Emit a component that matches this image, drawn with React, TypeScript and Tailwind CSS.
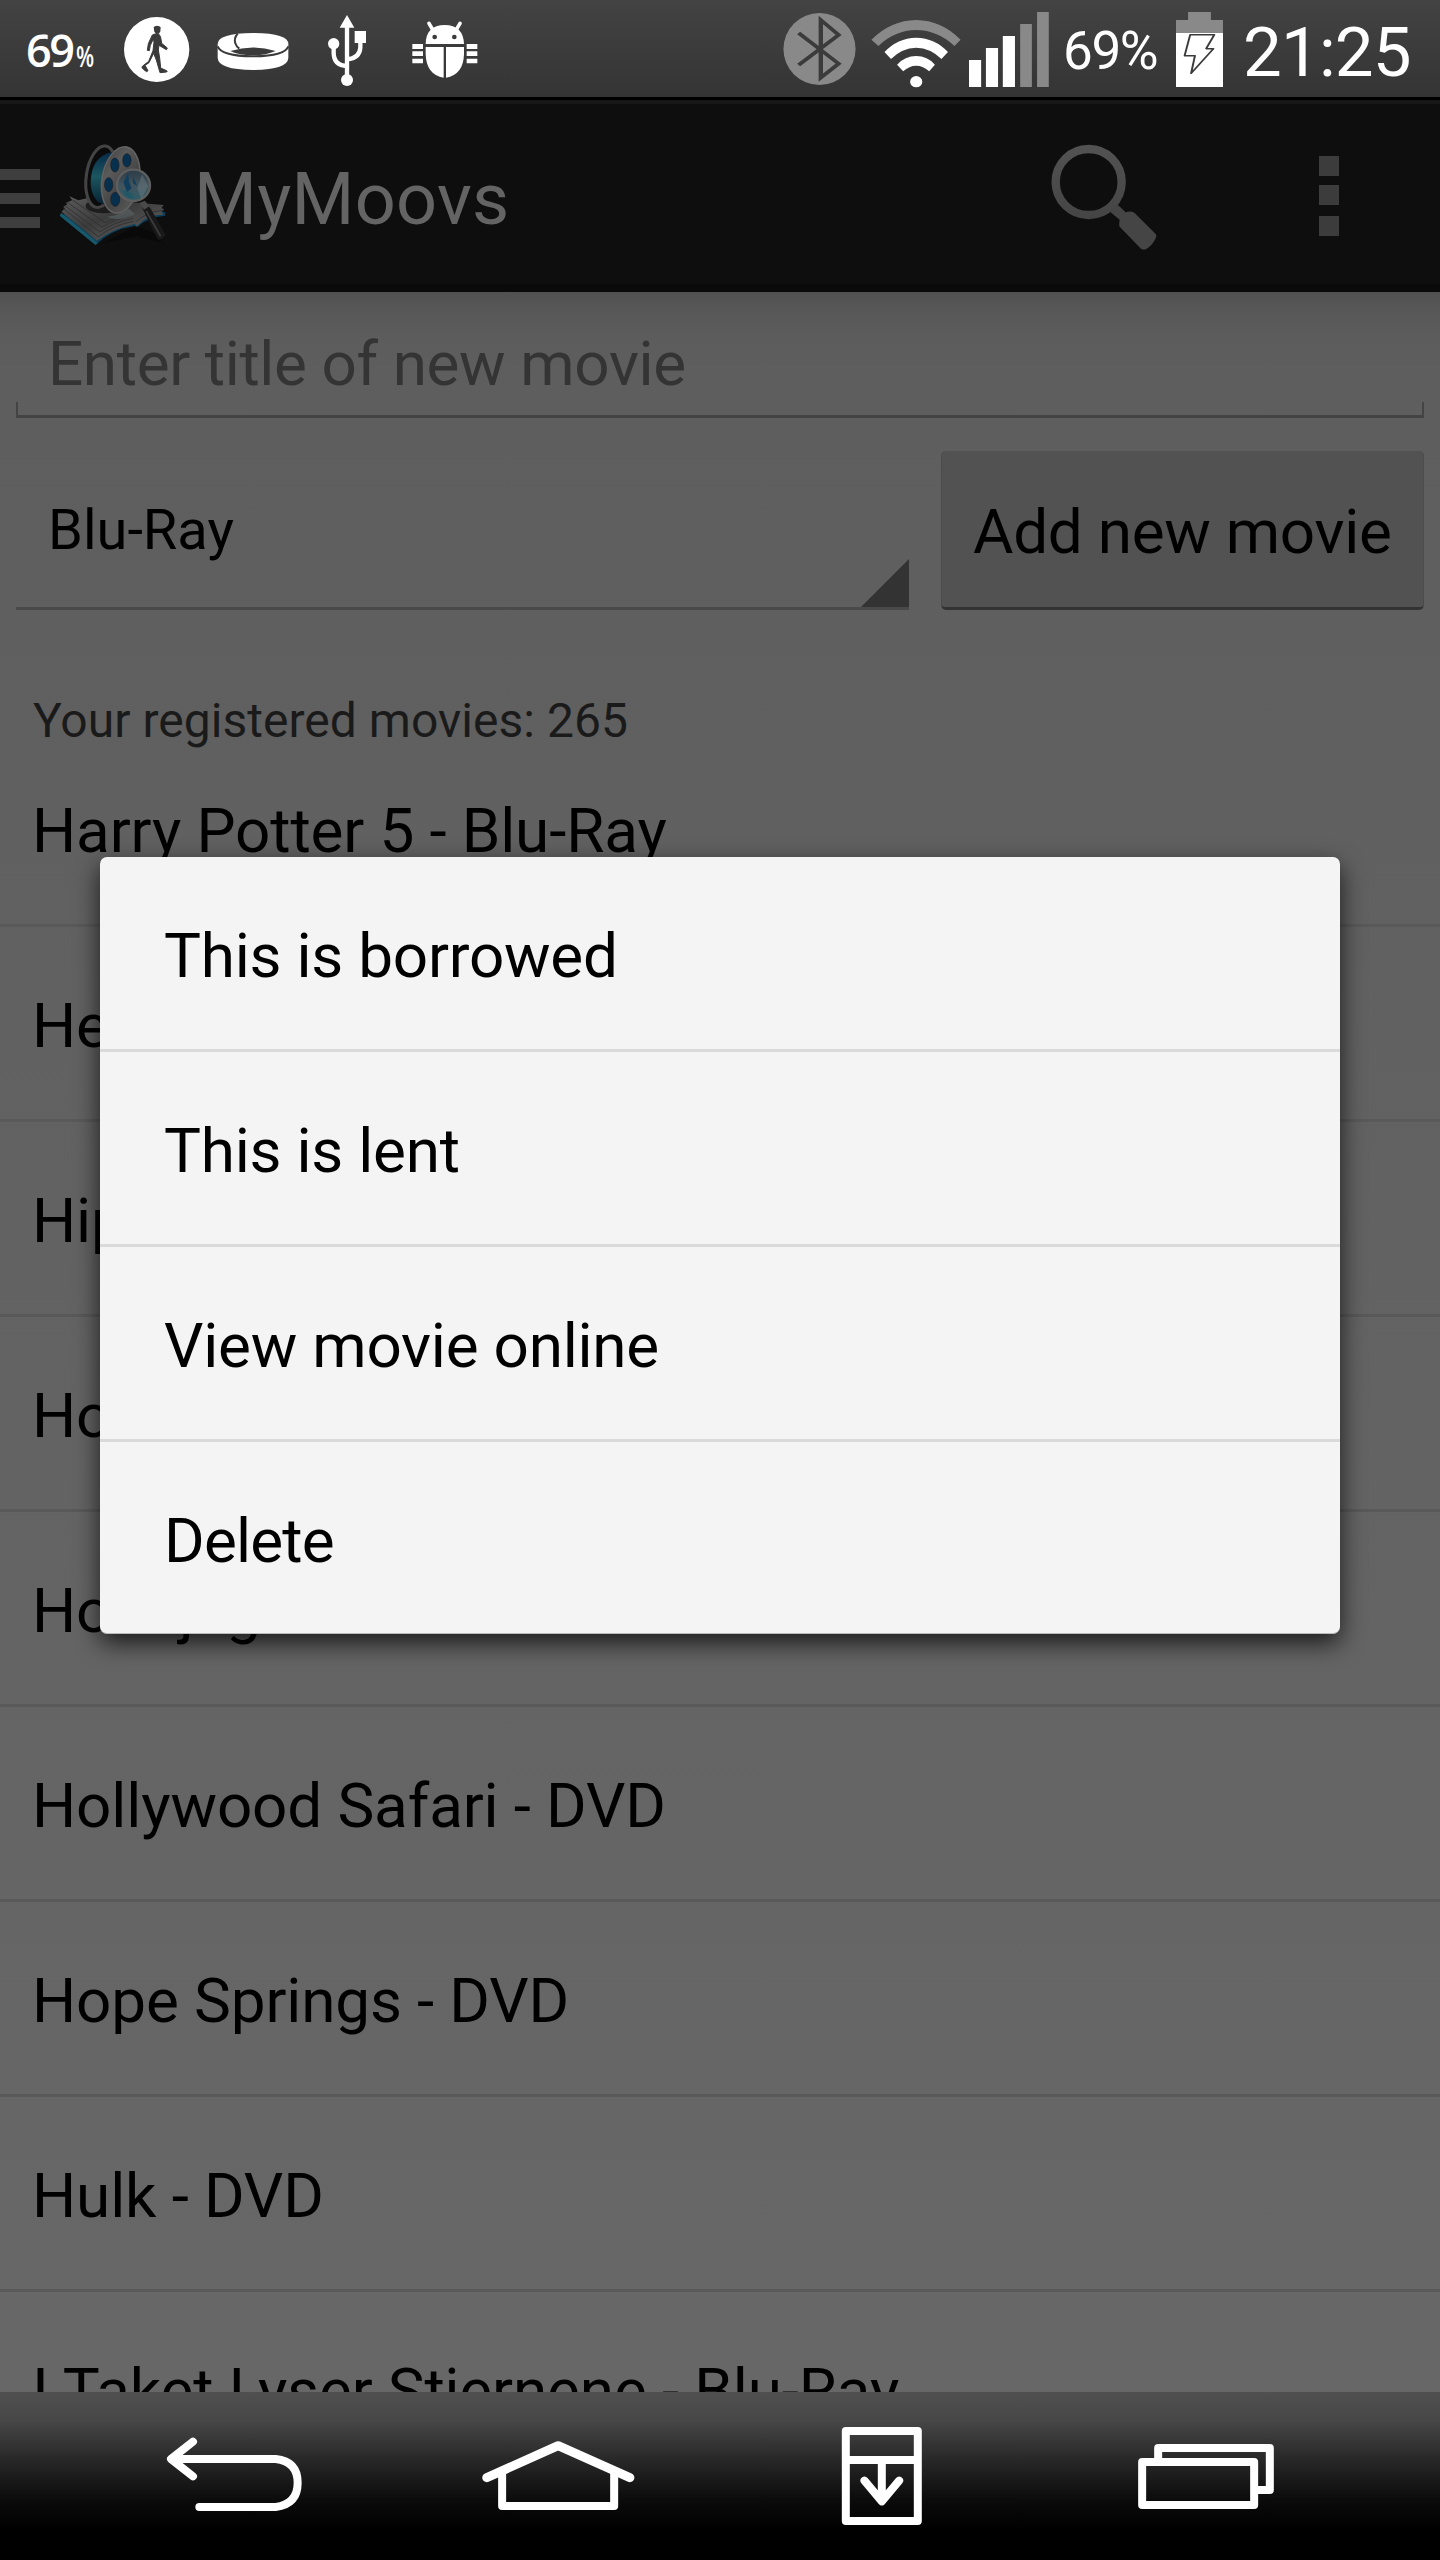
import React from 'react';

const movies = [
  'Harry Potter 5 - Blu-Ray',
  'He',
  'Hip',
  'Ho',
  'Hodejegerne',
  'Hollywood Safari - DVD',
  'Hope Springs - DVD',
  'Hulk - DVD',
  'I Taket Lyser Stjernene - Blu-Ray',
];

const actions = ['This is borrowed', 'This is lent', 'View movie online', 'Delete'];

function WalkIcon() {
  return (
    <svg className="ml-[29px] h-[97px] w-[68px] shrink-0" viewBox="369 0 204 291" fill="#3a3a3a">
      <ellipse cx="470" cy="148.500" rx="98" ry="97.500" fill="#fff" />
      <path d="M461 82q2-5 10-5t11 5l-1 12-4 7h-9l-5-6z" />
      <path
        d="M465 102q7-3 13 2l4 8 3 18 17 14-3 5-22-13-2 14 4 24 3 30 18 8q3 2 0 4l-20 2-11-38-8-20-14 28-12 8 9 16-4 3q-9-5-14-12l1-4 19-15 13-32 3-26-2-9-9 19-3 16-6-1 3-20 12-26z"
        stroke="#3a3a3a"
        strokeWidth="3"
        strokeLinejoin="round"
      />
    </svg>
  );
}

function BandIcon() {
  return (
    <svg className="ml-[25px] h-[97px] w-[74px] shrink-0" viewBox="647 0 222 291">
      <path d="M652 132q0-32 106-33 106 1 106 33v42q-2 35-106 36-104-1-106-36z" fill="#fff" />
      <path d="M690 153q68-21 136 0-30 13-68 13-42 0-68-13z" fill="#3a3a3a" />
      <path d="M652 139q10 29 106 30 96-1 106-30" fill="none" stroke="#3a3a3a" strokeWidth="6" />
      <path d="M712 101q-12 14-7 29 3 10 12 16" fill="none" stroke="#3a3a3a" strokeWidth="6" />
    </svg>
  );
}

function UsbIcon() {
  return (
    <svg className="ml-[36px] h-[97px] w-[42px] shrink-0" viewBox="978 0 126 291" fill="#fff">
      <path d="M1041 45l22 38h-44z" />
      <circle cx="1041" cy="240" r="18" />
      <circle cx="1001" cy="131" r="17" />
      <path d="M1064 93h34v36h-34z" />
      <g fill="none" stroke="#fff" strokeWidth="13">
        <path d="M1041 80v150M1001 140v18q0 38 40 40M1081 125v18q-2 32-40 35" />
      </g>
    </svg>
  );
}

function BugIcon() {
  return (
    <svg className="ml-[42px] h-[97px] w-[70px] shrink-0" viewBox="1229 0 210 291" fill="#fff">
      <path d="M1276 132q1-56 57-57 56 1 58 57z" />
      <path d="M1286 70l14 24M1379 70l-14 24" stroke="#fff" strokeWidth="11" strokeLinecap="round" />
      <circle cx="1303" cy="111" r="7" fill="#3a3a3a" />
      <circle cx="1362" cy="111" r="7" fill="#3a3a3a" />
      <path d="M1276 141h54v92q-52-8-54-70zM1337 141h54v22q-2 62-54 70z" />
      <path d="M1236 132h32v15h-32zM1236 154h32v14h-32zM1236 176h32v14h-32zM1399 132h32v15h-32zM1399 154h32v14h-32zM1399 176h32v14h-32z" />
    </svg>
  );
}

function BluetoothIcon() {
  return (
    <svg className="h-[97px] w-[73px] shrink-0" viewBox="52 0 168 291" preserveAspectRatio="none">
      <ellipse cx="136" cy="147" rx="83" ry="108" fill="#898989" />
      <path d="M88 99l92 92-41 42V60l41 45-92 90" fill="none" stroke="#3b3b3b" strokeWidth="10" />
    </svg>
  );
}

function WifiIcon() {
  return (
    <svg className="ml-[15px] h-[97px] w-[90px] shrink-0" viewBox="256 0 207 291" preserveAspectRatio="none" fill="#fff">
      <path d="M257 119Q302 61 360 60q58 1 102 59l-14 19q-38-47-88-48-50 1-87 48z" fill="#898989" />
      <path d="M287 156q30-42 73-43 43 1 73 43l-15 21q-25-33-58-34-33 1-58 34z" />
      <path d="M316 194q18-26 44-26t43 26l-13 20q-14-17-30-17t-30 17z" />
      <ellipse cx="360" cy="245" rx="14" ry="17" />
    </svg>
  );
}

function SignalIcon() {
  return (
    <svg className="ml-[8px] h-[97px] w-[80px] shrink-0" viewBox="482 0 184.500 291" preserveAspectRatio="none" fill="#fff">
      <path d="M482 180h28v81h-28zM521 144h28v117h-28zM560 108h28v153h-28z" />
      <path d="M600 72h27v189h-27zM639 36h27v225h-27z" fill="#898989" />
    </svg>
  );
}

function BatteryIcon() {
  return (
    <svg className="h-[97px] w-[47px] shrink-0" viewBox="959 0 109 291" preserveAspectRatio="none">
      <path d="M987 36h53v24h28v40H959V60h28z" fill="#898989" />
      <path d="M959 99h109v162H959z" fill="#fff" />
      <path d="M992 104h56l-19 42h17l-52 74 9-53h-24z" fill="#fff" stroke="#3a3a3a" strokeWidth="4.500" strokeLinejoin="round" />
    </svg>
  );
}

function AppLogo() {
  return (
    <svg className="h-[107px] w-[114px] shrink-0" viewBox="165 150 331 321" preserveAspectRatio="none">
      <defs>
        <linearGradient id="metal" x1="0" y1="0" x2="1" y2="1">
          <stop offset="0" stopColor="#3c3c3c" />
          <stop offset=".3" stopColor="#5a5a5a" />
          <stop offset=".6" stopColor="#444" />
          <stop offset="1" stopColor="#606060" />
        </linearGradient>
        <linearGradient id="film" x1="0" y1="0" x2="0" y2="1">
          <stop offset="0" stopColor="#062a48" />
          <stop offset=".45" stopColor="#1c5660" />
          <stop offset="1" stopColor="#082033" />
        </linearGradient>
        <linearGradient id="glass" x1="0" y1="0" x2="0" y2="1">
          <stop offset="0" stopColor="#2a3a46" />
          <stop offset=".5" stopColor="#43545e" />
          <stop offset="1" stopColor="#2d5c66" />
        </linearGradient>
        <linearGradient id="paper" x1="0" y1="0" x2="1" y2="1">
          <stop offset="0" stopColor="#5c5c5c" />
          <stop offset=".45" stopColor="#3c3c3c" />
          <stop offset="1" stopColor="#676767" />
        </linearGradient>
      </defs>
      <path d="M300 455l95-50 85 35-20 14-60-18z" fill="#090909" />
      <path d="M173 374l104 88q45-46 112-57l10 3q28-30 80-34v-10L300 330z" fill="#0c3f5a" />
      <path d="M173 374l104 88 6-7-106-90z" fill="#17596b" />
      <path d="M178 362l10-10-5-4 12-8-4-5 18-7-8-12 26 12 30-8 150 16 68 6-7 9 8 4-7 8 4 8q-45 0-66 26l-10 8-6-6q-64 14-110 50z" fill="url(#paper)" />
      <path d="M184 353l101 84q42-34 102-46M187 343l102 80q40-29 96-41M195 334l100 74q40-22 85-35M210 327l95 68q38-18 70-26M395 392q30-30 78-34" fill="none" stroke="#303030" strokeWidth="2.500" />
      <ellipse cx="300" cy="345" rx="52" ry="22" fill="#101010" opacity=".75" />
      <ellipse cx="293" cy="257" rx="43" ry="93" transform="rotate(8 293 257)" fill="#0b0b0b" stroke="#444" strokeWidth="9" />
      <path d="M322 184q-48 12-57 66t20 84l26 10 20-160z" fill="url(#film)" />
      <ellipse cx="350" cy="267" rx="57" ry="103" transform="rotate(9 350 267)" fill="url(#metal)" />
      <ellipse cx="350" cy="267" rx="54" ry="100" transform="rotate(9 350 267)" fill="none" stroke="#666" strokeWidth="3" />
      <g fill="#07304f" stroke="#171d22" strokeWidth="2">
        <ellipse cx="333" cy="222" rx="12" ry="21" />
        <ellipse cx="368" cy="208" rx="12" ry="20" />
        <ellipse cx="315" cy="281" rx="12" ry="21" />
        <ellipse cx="334" cy="325" rx="13" ry="21" />
      </g>
      <path d="M308 376q30 20 84-6l-20-18q-28 26-64 24z" fill="#626b6d" opacity=".5" />
      <path d="M412 350l14-10 12 15 43 77q-8 16-23 14z" fill="#191919" />
      <path d="M424 360l42 76" stroke="#3c3c3c" strokeWidth="5" />
      <path d="M404 336l16-7 13 17-15 10z" fill="#4a4a4a" />
      <ellipse cx="387" cy="283" rx="48" ry="47" fill="url(#glass)" stroke="#5e5e5e" strokeWidth="7" />
      <path d="M372 246l-14 28 10 30 14-12-8-20z M386 256l12 30-12-10z" fill="#123e5d" />
      <path d="M412 250l18 36-20 38-12-32z" fill="#6a777d" opacity=".5" />
      <path d="M352 296q14 26 36 28l-6-18z" fill="#225865" />
    </svg>
  );
}

function SearchIcon() {
  return (
    <svg className="h-[113px] w-[115px] shrink-0" viewBox="140 150 345 339">
      <defs>
        <linearGradient id="lens" x1="0" y1="0" x2="0" y2="1">
          <stop offset="0" stopColor="#525252" />
          <stop offset="1" stopColor="#454545" />
        </linearGradient>
      </defs>
      <ellipse cx="268" cy="276" rx="99" ry="99" fill="none" stroke="url(#lens)" strokeWidth="25" />
      <path d="M333 366l22-22 24 23q16-5 26 1l62 62q7 6 2 15-8 20-28 32-8 4-16-1l-64-66q-3-5 0-21z" fill="#454545" />
    </svg>
  );
}

function BackIcon() {
  return (
    <svg className="h-[168px] w-[142px] shrink-0" viewBox="355 276 309.300 504" preserveAspectRatio="none" fill="none" stroke="#fff">
      <g transform="scale(.726 1)" strokeWidth="24" strokeLinecap="round" strokeLinejoin="round">
        <path d="M579 425l-66 52 66 52M525 477h302q66 7 66 71.500T827 621H598" />
      </g>
    </svg>
  );
}

function HomeIcon() {
  return (
    <svg className="ml-[174px] h-[168px] w-[158px] shrink-0" viewBox="1043 276 344 504" preserveAspectRatio="none" fill="none" stroke="#fff">
      <g transform="scale(.726 1)" strokeWidth="24" strokeLinecap="round" strokeLinejoin="round">
        <path d="M1506 520v98h336v-98" />
        <path d="M1460 533l214-96 215 96" strokeWidth="27" />
      </g>
    </svg>
  );
}

function NotificationIcon() {
  return (
    <svg className="ml-[201px] h-[168px] w-[88px] shrink-0" viewBox="257.400 276 191.700 504" preserveAspectRatio="none" fill="none" stroke="#fff">
      <g transform="scale(.726 1)" strokeWidth="24" strokeLinecap="round" strokeLinejoin="round">
        <path d="M378 393h216v270H378zM378 480h216M486 480v115M434 542l52 62 52-62" />
      </g>
    </svg>
  );
}

function RecentsIcon() {
  return (
    <svg className="ml-[206px] h-[168px] w-[150px] shrink-0" viewBox="897 276 326.700 504" preserveAspectRatio="none" fill="none" stroke="#fff">
      <g transform="scale(.726 1)" strokeWidth="24" strokeLinejoin="round">
        <path d="M1266 486h336v129h-336z" />
        <path d="M1314 480v-36h335v126h-42" />
      </g>
    </svg>
  );
}

export default function App() {
  return (
    <div className="relative flex h-[2560px] w-[1440px] flex-col overflow-hidden bg-black font-['Roboto',sans-serif] whitespace-nowrap">
      <div className="flex h-[97px] shrink-0 items-center bg-linear-to-b from-[#434343] to-[#343434] text-white">
        <div className="flex w-[94px] items-baseline pt-[2px] pl-[26px] font-['Open_Sans',sans-serif]">
          <span className="text-[45px] font-semibold tracking-[-2.500px]">69</span>
          <span className="ml-[4px] inline-block origin-left scale-x-75 text-[28px] leading-none font-semibold">%</span>
        </div>
        <WalkIcon />
        <BandIcon />
        <UsbIcon />
        <BugIcon />
        <div className="ml-auto flex h-full items-center">
          <BluetoothIcon />
          <WifiIcon />
          <SignalIcon />
          <span className="ml-[14px] w-[113px] pt-[6px] text-[53px] tracking-[-1.400px]">69%</span>
          <BatteryIcon />
          <span className="ml-[20px] w-[197px] pt-[8px] text-[69px] tracking-[-0.800px]">21:25</span>
        </div>
      </div>

      <header className="mt-[3px] flex h-[192px] shrink-0 items-center border-t-4 border-b-8 border-t-[#171717] border-b-[#0a0a0a] bg-[#0e0e0e]">
        <div className="flex w-[40px] flex-col gap-[13px] pt-[8px]">
          <div className="h-[11px] bg-[#3e3e3e]" />
          <div className="h-[11px] bg-[#3e3e3e]" />
          <div className="h-[11px] bg-[#3e3e3e]" />
        </div>
        <div className="ml-[17px]">
          <AppLogo />
        </div>
        <h1 className="ml-[23px] pt-[11px] text-[72px] tracking-[0.300px] text-[#646464]">MyMoovs</h1>
        <div className="mr-[158px] ml-auto pt-[4px]">
          <SearchIcon />
        </div>
        <div className="mr-[101px] flex w-[20px] flex-col gap-[9px] pt-[4px]">
          <div className="h-[20px] bg-[#3c3c3c]" />
          <div className="h-[20px] bg-[#3c3c3c]" />
          <div className="mt-[2px] h-[20px] bg-[#3c3c3c]" />
        </div>
      </header>

      <main className="flex min-h-0 flex-1 flex-col bg-[linear-gradient(to_bottom,#505050_0px,#575757_15px,#5c5c5c_45px,#5e5e5e_80px,#616161_700px,#676767_2000px)] text-black">
        <div className="mx-[16px] flex flex-col">
          <div className="pt-[36px] pb-[2px] pl-[32px] text-[62px] leading-[72px] tracking-[-0.370px] text-[#343434]">
            Enter title of new movie
          </div>
          <div className="h-[16px] border-x-2 border-b-3 border-[#444]" />
        </div>
        <div className="mx-[16px] mt-[33px] flex h-[159px] gap-[32px]">
          <div className="relative flex w-[893px] items-center border-b-3 border-[#4a4a4a] pt-[2px] pl-[32px] text-[56px]">
            Blu-Ray
            <svg className="absolute right-0 bottom-0 h-[48px] w-[48px]" viewBox="0 0 48 48">
              <path d="M48 0v48H0z" fill="#333" />
            </svg>
          </div>
          <button className="flex flex-1 items-center rounded-[5px] border-x-1 border-b-3 border-x-[#4b4b4b] border-b-[#333] bg-[#525252] pt-[5px] pl-[31px] text-[62px] tracking-[-0.270px]">
            Add new movie
          </button>
        </div>
        <div className="pt-[83px] pl-[33px] text-[48px] leading-[56px] tracking-[0.030px] text-[#1a1a1a]">Your registered movies: 265</div>
        <ul className="min-h-0 flex-1 overflow-hidden">
          {movies.map((m, i) => (
            <li
              key={m}
              className={`flex h-[195px] items-center border-b-3 border-[#595959] pt-[4px] pl-[32px] text-[62px] tracking-[-0.130px] ${i === 0 ? '-mt-[17px]' : ''}`}
            >
              {m}
            </li>
          ))}
        </ul>
      </main>

      <nav className="flex h-[168px] shrink-0 bg-[linear-gradient(to_bottom,#505050_0px,#474747_28px,#292929_66px,#0b0b0b_108px,#000_138px)] pl-[163px]">
        <BackIcon />
        <HomeIcon />
        <NotificationIcon />
        <RecentsIcon />
      </nav>

      <div
        role="dialog"
        className="absolute top-[857px] left-[100px] h-[777px] w-[1240px] overflow-hidden rounded-[7px] border-b-1 border-[#bbb] bg-[#f4f4f4] text-black shadow-[0_9px_24px_rgba(0,0,0,0.73)]"
      >
        {actions.map((a, i) => (
          <div
            key={a}
            className={`flex items-center border-[#dadada] pt-[5px] pl-[64px] text-[62px] ${i < 3 ? 'h-[195px] border-b-3 tracking-[-0.230px]' : 'h-[192px] tracking-[-0.800px]'}`}
          >
            {a}
          </div>
        ))}
      </div>
    </div>
  );
}
